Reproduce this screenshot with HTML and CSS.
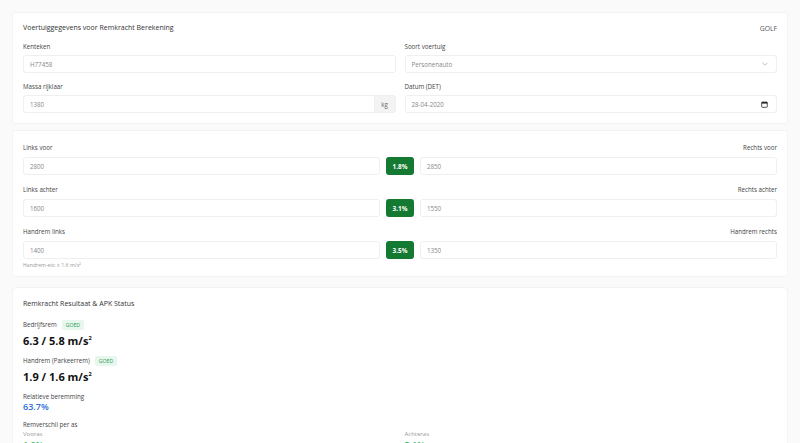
FILE: index.html
```html
<!DOCTYPE html>
<html lang="nl">
<head>
<meta charset="utf-8">
<title>Remkracht Berekening</title>
<link rel="stylesheet" href="styles.css">
</head>
<body>
<main class="page">
  <section class="card">
    <header class="card-head">
      <h2 class="card-title">Voertuiggegevens voor Remkracht Berekening</h2>
      <span class="model">GOLF</span>
    </header>
    <div class="form-grid">
      <div class="field">
        <label class="label">Kenteken</label>
        <div class="input">H77458</div>
      </div>
      <div class="field">
        <label class="label">Soort voertuig</label>
        <div class="input select">Personenauto
          <svg class="chev" viewBox="0 0 10 6" width="6" height="4"><path d="M1 1l4 4 4-4" fill="none" stroke="#999" stroke-width="1"/></svg>
        </div>
      </div>
      <div class="field">
        <label class="label">Massa rijklaar</label>
        <div class="input-group">
          <div class="input grow">1380</div>
          <span class="addon">kg</span>
        </div>
      </div>
      <div class="field">
        <label class="label">Datum (DET)</label>
        <div class="input select">28-04-2020
          <svg class="cal" viewBox="0 0 10 10" width="7" height="7"><rect x="1" y="1.5" width="8" height="7.5" rx="1" fill="none" stroke="#222" stroke-width="1.1"/><rect x="1" y="1.5" width="8" height="2.2" fill="#222"/></svg>
        </div>
      </div>
    </div>
  </section>

  <section class="card wheels">
    <div class="wheel-grid">
      <label class="label">Links voor</label>
      <span></span>
      <label class="label right">Rechts voor</label>
      <div class="input">2800</div>
      <span class="pct">1.8%</span>
      <div class="input">2850</div>

      <label class="label">Links achter</label>
      <span></span>
      <label class="label right">Rechts achter</label>
      <div class="input">1600</div>
      <span class="pct">3.1%</span>
      <div class="input">1550</div>

      <label class="label">Handrem links</label>
      <span></span>
      <label class="label right">Handrem rechts</label>
      <div class="input">1400</div>
      <span class="pct">3.5%</span>
      <div class="input">1350</div>
      <small class="hint">Handrem-eis: ≥ 1.6 m/s²</small>
    </div>
  </section>

  <section class="card status">
    <h2 class="card-title">Remkracht Resultaat &amp; APK Status</h2>
    <div class="result">
      <div class="res-label">Bedrijfsrem <span class="tag">GOED</span></div>
      <div class="res-value">6.3 / 5.8 m/s<sup>2</sup></div>
    </div>
    <div class="result">
      <div class="res-label">Handrem (Parkeerrem) <span class="tag">GOED</span></div>
      <div class="res-value">1.9 / 1.6 m/s<sup>2</sup></div>
    </div>
    <div class="result">
      <div class="res-label">Relatieve beremming</div>
      <div class="rel">63.7%</div>
    </div>
    <div class="result">
      <div class="res-label">Remverschil per as</div>
      <div class="axles">
        <div><div class="axle-name">Vooras</div><div class="axle-val">1.8%</div></div>
        <div><div class="axle-name">Achteras</div><div class="axle-val">3.1%</div></div>
      </div>
    </div>
  </section>
</main>
</body>
</html>
```

FILE: styles.css
```css
* { box-sizing: border-box; }

html, body {
  margin: 0;
  background: #fafafa;
  font-family: "Open Sans", "Noto Sans", sans-serif;
  color: #333;
}

.page {
  padding: 12px 12px 0;
  display: flex;
  flex-direction: column;
  gap: 6px;
}

.card {
  background: #fff;
  border: 1px solid #f3f3f3;
  border-radius: 4px;
  padding: 10px;
}

.card-head {
  display: flex;
  justify-content: space-between;
  align-items: center;
}

.card-title {
  margin: 0;
  font-size: 7px;
  font-weight: 400;
  color: #333;
  line-height: 10px;
}

.model {
  font-size: 6.8px;
  color: #555;
}

.form-grid {
  margin-top: 9px;
  display: grid;
  grid-template-columns: 1fr 1fr;
  column-gap: 9px;
  row-gap: 9px;
}

.field { display: flex; flex-direction: column; gap: 4px; }

.label {
  font-size: 6.2px;
  color: #444;
  line-height: 9px;
}

.input {
  height: 18px;
  background: #fff;
  border: 1px solid #efefef;
  border-radius: 3px;
  padding: 0 6px;
  display: flex;
  align-items: center;
  font-size: 6.2px;
  color: #888;
}

.select { justify-content: space-between; }
.chev { margin-right: 2px; }
.cal { margin-right: 2px; }

.input-group { display: flex; }
.grow { flex: 1; border-radius: 3px 0 0 3px; }
.addon {
  width: 21px;
  background: #f3f3f3;
  border: 1px solid #efefef;
  border-left: 0;
  border-radius: 0 3px 3px 0;
  display: flex;
  align-items: center;
  justify-content: center;
  font-size: 6.2px;
  color: #666;
}

.wheels { padding-top: 12px; padding-bottom: 7px; }

.wheel-grid {
  display: grid;
  grid-template-columns: 1fr 28px 1fr;
  column-gap: 6px;
}

.wheel-grid .label { margin-bottom: 5px; }
.wheel-grid .input { margin-bottom: 10px; }
.right { text-align: right; }

.pct {
  height: 18px;
  background: #157a31;
  border-radius: 3px;
  color: #fff;
  font-size: 6.4px;
  font-weight: 700;
  display: flex;
  align-items: center;
  justify-content: center;
}

.hint {
  grid-column: 1 / -1;
  margin-top: -7px;
  font-size: 5.2px;
  color: #999;
  line-height: 7px;
}

.status { margin-top: 4px; padding-top: 11px; }

.result { margin-top: 8px; }
.result:first-of-type { margin-top: 11px; }

.res-label {
  font-size: 6.2px;
  color: #444;
  display: flex;
  align-items: center;
  gap: 5px;
  line-height: 10px;
}

.tag {
  background: #e8f7ed;
  color: #2c9a55;
  font-size: 5.2px;
  padding: 1px 4px;
  border-radius: 2px;
  line-height: 8px;
}

.res-value {
  margin-top: 4px;
  font-size: 11px;
  font-weight: 700;
  color: #111;
  line-height: 14px;
}
.res-value sup { font-size: 5.6px; vertical-align: 5px; line-height: 0; }

.rel {
  font-size: 9px;
  color: #2e6fd8;
  font-weight: 600;
  line-height: 10px;
}

.axles {
  display: grid;
  grid-template-columns: 1fr 1fr;
  column-gap: 9px;
}
.axle-name { font-size: 6px; color: #999; line-height: 9px; }
.axle-val { font-size: 9px; color: #2db45a; font-weight: 600; line-height: 11px; }
```
